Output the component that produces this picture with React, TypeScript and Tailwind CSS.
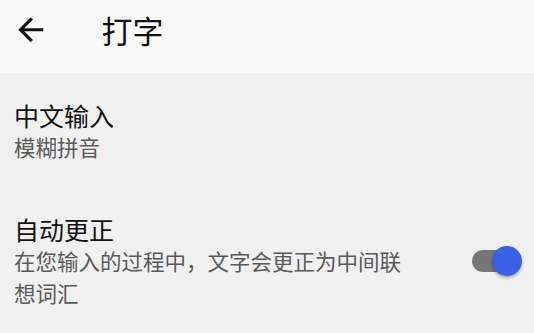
import React from "react";

function BackArrow() {
  return (
    <svg viewBox="0 0 24 24" className="h-[37.5px] w-[37.5px]" fill="#111">
      <path d="M20 11H7.83l5.59-5.59L12 4l-8 8 8 8 1.41-1.41L7.83 13H20v-2z" />
    </svg>
  );
}

function Toggle({ on }: { on: boolean }) {
  return (
    <div className="relative h-[30px] w-[50px] shrink-0">
      <div className="absolute left-0 top-[4px] h-[22px] w-[36px] rounded-full bg-[#767676]" />
      <div
        className={
          on
            ? "absolute right-0 top-0 h-[30px] w-[30px] rounded-full bg-[#3a61e5] shadow-[0_2px_3px_rgba(0,0,0,0.3)]"
            : "absolute left-0 top-0 h-[30px] w-[30px] rounded-full bg-[#fafafa] shadow-[0_2px_3px_rgba(0,0,0,0.3)]"
        }
      />
    </div>
  );
}

function SettingRow({
  title,
  summary,
  toggle,
}: {
  title: string;
  summary: string;
  toggle?: boolean;
}) {
  return (
    <div className="flex items-center pl-[14px] pr-[12px] pt-[26px] pb-[24px]">
      <div className="w-[398px]">
        <div className="text-[25px] leading-[32px] text-[#111]">{title}</div>
        <div className="text-[21.5px] leading-[32px] text-[#5a5a5a]">{summary}</div>
      </div>
      <div className="flex-1" />
      {toggle !== undefined && <Toggle on={toggle} />}
    </div>
  );
}

export default function App() {
  return (
    <div
      className="min-h-screen bg-[#f0f0f0]"
      style={{ fontFamily: '"Noto Sans CJK SC", "Noto Sans", sans-serif' }}
    >
      <header className="h-[73px] bg-[#fafafa]">
        <div className="flex h-[59px] items-center">
          <div className="ml-[12px]">
            <BackArrow />
          </div>
          <h1 className="ml-[52px] text-[31px] leading-[40px] text-[#111]">打字</h1>
        </div>
      </header>
      <SettingRow title="中文输入" summary="模糊拼音" />
      <SettingRow
        title="自动更正"
        summary="在您输入的过程中，文字会更正为中间联想词汇"
        toggle
      />
    </div>
  );
}
